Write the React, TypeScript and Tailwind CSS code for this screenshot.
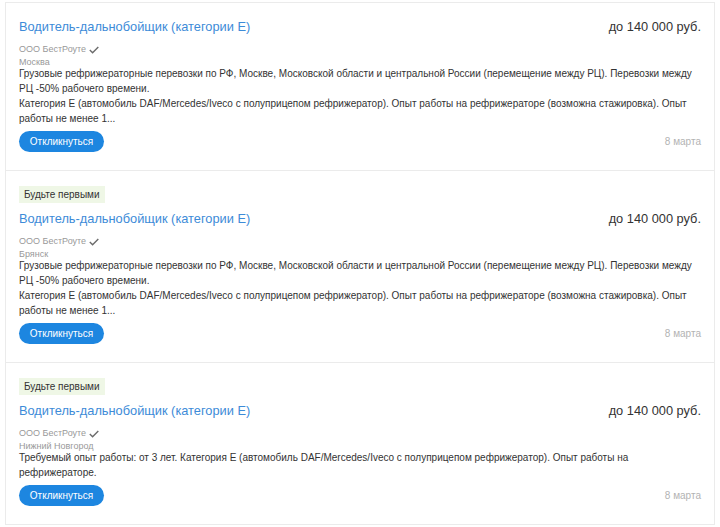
const vacancies = [
  {
    id: 1,
    badge: false,
    city: "Москва",
    text: [
      "Грузовые рефрижераторные перевозки по РФ, Москве, Московской области и центральной России (перемещение между РЦ). Перевозки между РЦ -50% рабочего времени.",
      "Категория Е (автомобиль DAF/Mercedes/Iveco с полуприцепом рефрижератор). Опыт работы на рефрижераторе (возможна стажировка). Опыт работы не менее 1...",
    ],
  },
  {
    id: 2,
    badge: true,
    city: "Брянск",
    text: [
      "Грузовые рефрижераторные перевозки по РФ, Москве, Московской области и центральной России (перемещение между РЦ). Перевозки между РЦ -50% рабочего времени.",
      "Категория Е (автомобиль DAF/Mercedes/Iveco с полуприцепом рефрижератор). Опыт работы на рефрижераторе (возможна стажировка). Опыт работы не менее 1...",
    ],
  },
  {
    id: 3,
    badge: true,
    city: "Нижний Новгород",
    text: [
      "Требуемый опыт работы: от 3 лет. Категория Е (автомобиль DAF/Mercedes/Iveco с полуприцепом рефрижератор). Опыт работы на рефрижераторе.",
    ],
  },
];

function Check() {
  return (
    <svg width="10" height="8" viewBox="0 0 10 8" className="ml-[3px] inline-block">
      <path d="M0.8 4 L3.6 6.8 L9.3 1" fill="none" stroke="#6b6b6b" strokeWidth="1.4" />
    </svg>
  );
}

export default function App() {
  return (
    <div className="min-h-[527px] bg-white pt-[2px] font-['Liberation_Sans',Arial,sans-serif]">
      <div className="ml-[5px] w-[710px] border-x border-t border-[#ebebeb]">
        {vacancies.map((v) => (
          <div key={v.id} className="border-b border-[#ebebeb] pl-[13px] pr-[13px] pt-[15px] pb-[18px]">
            {v.badge && (
              <div className="mb-[7px] block h-[17px] w-fit bg-[#eff7e6] px-[5px] text-[10px] leading-[17px] text-[#333]">
                Будьте первыми
              </div>
            )}
            <div className="flex items-start justify-between">
              <a className="text-[12.8px] leading-[18px] text-[#3d8bd8]">
                Водитель-дальнобойщик (категории Е)
              </a>
              <span className="text-[12.8px] leading-[18px] text-[#333]">до 140 000 руб.</span>
            </div>
            <div className="mt-[7px] flex items-center text-[9px] leading-[13px] text-[#999]">
              ООО БестРоуте
              <Check />
            </div>
            <div className="text-[9px] leading-[13px] text-[#999]">{v.city}</div>
            <div className="-mt-[3px] pr-[8px] text-[10px] leading-[15px] text-[#333]">
              {v.text.map((t, i) => (
                <p key={i}>{t}</p>
              ))}
            </div>
            <div className="mt-[5px] flex items-center justify-between">
              <button className="h-[21px] w-[85px] rounded-full bg-[#1d86e0] text-[10px] text-white">
                Откликнуться
              </button>
              <span className="text-[10px] text-[#b3b3b3]">8 марта</span>
            </div>
          </div>
        ))}
      </div>
    </div>
  );
}
